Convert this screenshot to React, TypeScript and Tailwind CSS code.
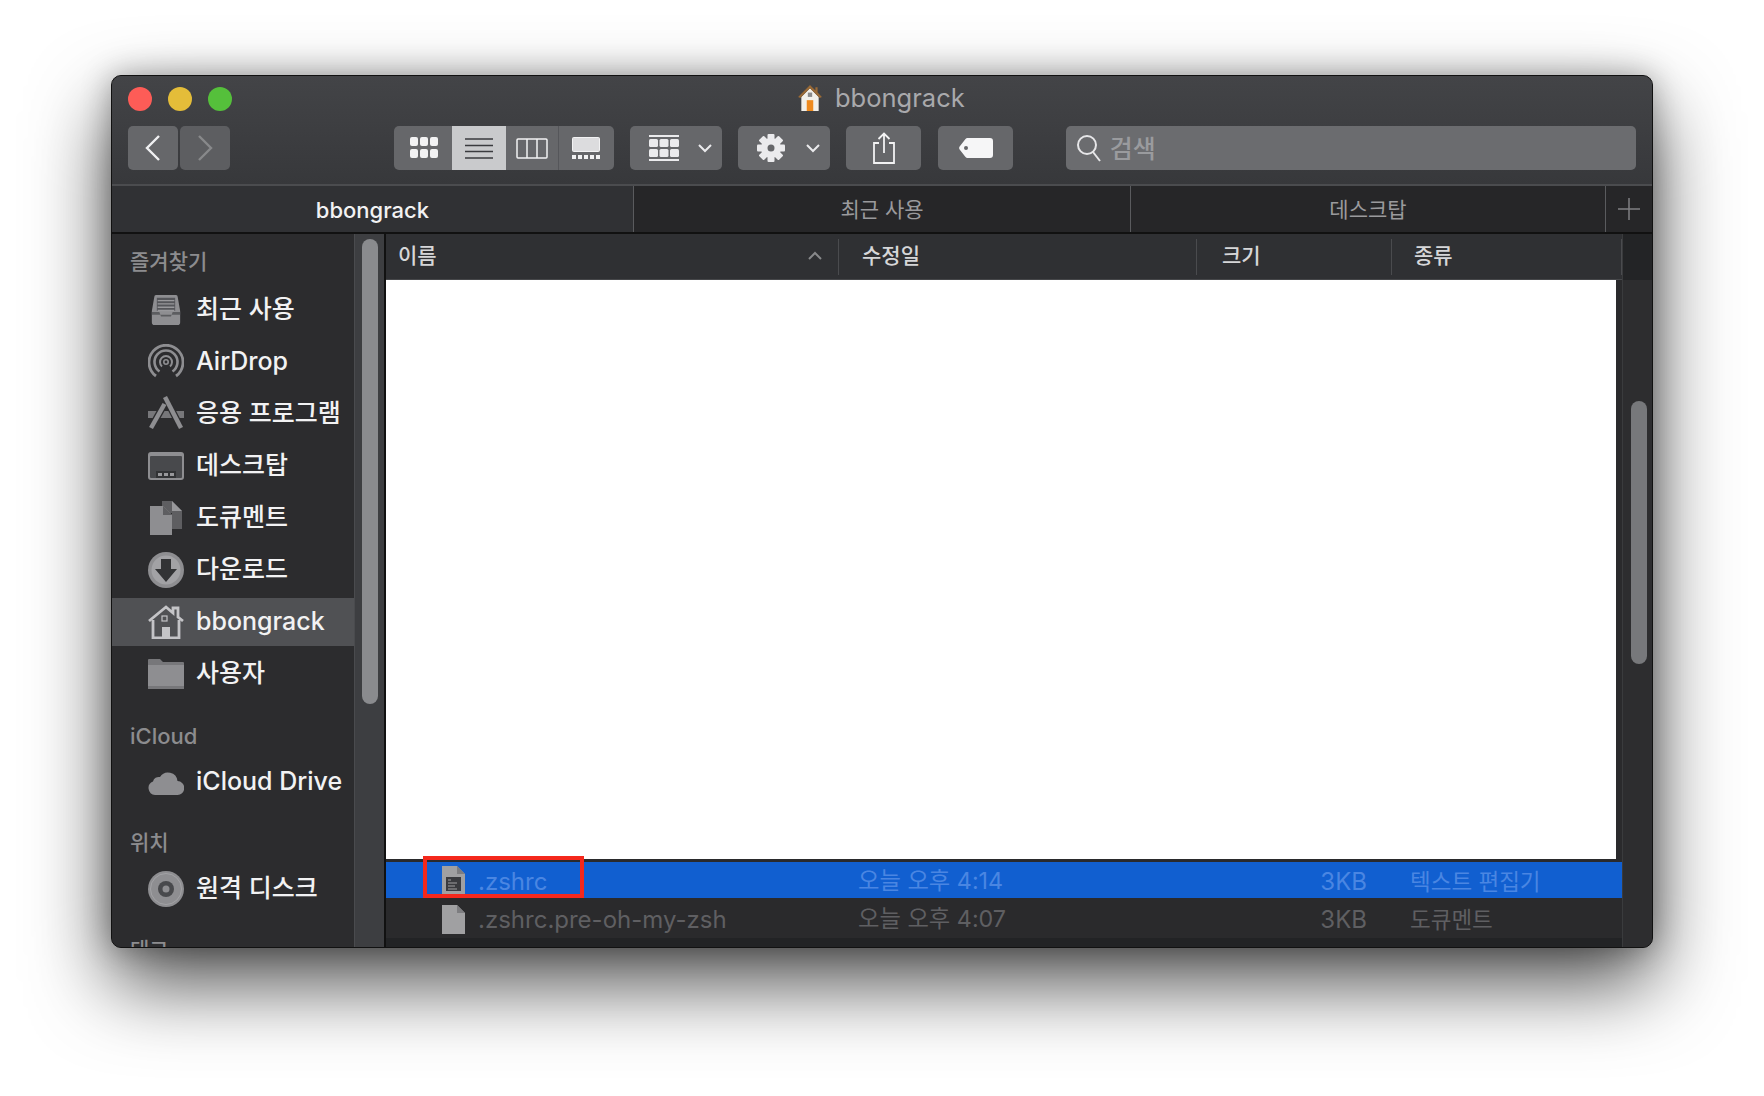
import { ReactNode } from 'react'

const font = { fontFamily: 'Inter, "Noto Sans CJK KR", sans-serif' }

function Recents() {
  return (
    <svg width="30" height="32" viewBox="0 0 36 34" preserveAspectRatio="none">
      <path d="M6 1h24a2 2 0 0 1 2 2l3 15v12a3 3 0 0 1-3 3H4a3 3 0 0 1-3-3V18L4 3a2 2 0 0 1 2-2z" fill="#8e8e91" />
      <path d="M7 4h22v14H7z" fill="#55565a" />
      <path d="M8 7h20M8 10.500h20M8 14h20M8 17.500h20" stroke="#98989b" strokeWidth="1.500" />
      <path d="M1 19h9l2 5h12l2-5h9v3H1z" fill="#5c5d60" />
    </svg>
  )
}

function AirDropIcon() {
  return (
    <svg width="36" height="36" viewBox="0 0 36 36" fill="none" stroke="#8e8e91">
      <circle cx="18" cy="18" r="2.200" strokeWidth="1.600" />
      <path d="M14 22.500A6 6 0 1 1 22 22.500" strokeWidth="2" />
      <path d="M11.500 27.500A11.500 11.500 0 1 1 24.500 27.500" strokeWidth="2.600" />
      <path d="M8 32A17 17 0 1 1 28 32" strokeWidth="2.800" />
    </svg>
  )
}

function AppsIcon() {
  return (
    <svg width="36" height="36" viewBox="0 0 36 36">
      <path d="M0 15h36v7H0z" fill="#77777a" />
      <path d="M17 1L33 32" stroke="#2c2c2e" strokeWidth="7" />
      <path d="M17 7L3 32" stroke="#2c2c2e" strokeWidth="7" />
      <path d="M17 1L33 32" stroke="#8e8e91" strokeWidth="4.500" />
      <path d="M16.500 8L3 32" stroke="#8e8e91" strokeWidth="4.500" />
    </svg>
  )
}

function DesktopIcon() {
  return (
    <svg width="36" height="28" viewBox="0 0 36 28">
      <rect width="36" height="28" rx="3" fill="#8e8e91" />
      <rect x="2" y="4" width="32" height="22" rx="1" fill="#48494c" />
      <rect x="8" y="19" width="20" height="7" fill="#323335" />
      <path d="M10 21h4v3h-4zM16 21h4v3h-4zM22 21h4v3h-4z" fill="#98989b" />
    </svg>
  )
}

function DocsIcon() {
  return (
    <svg width="32" height="34" viewBox="0 0 32 34">
      <path d="M12 0h10l10 10v18H22V12H12z" fill="#5e5e61" />
      <path d="M22 0l10 10H22z" fill="#98989b" />
      <path d="M0 5h13l9 9v20H0z" fill="#8e8e91" />
      <path d="M13 5l9 9h-9z" fill="#5e5e61" />
    </svg>
  )
}

function DownloadIcon() {
  return (
    <svg width="36" height="36" viewBox="0 0 36 36">
      <circle cx="18" cy="18" r="18" fill="#8e8e91" />
      <circle cx="18" cy="18" r="14.500" fill="#a2a2a5" />
      <path d="M13 7h10v10h6L18 30 7 17h6z" fill="#323335" />
    </svg>
  )
}

function HomeIcon() {
  return (
    <svg width="36" height="34" viewBox="0 0 36 34" fill="none">
      <path d="M1 16L18 2l7 6V3h5v9l5 4" stroke="#c4c4c7" strokeWidth="2.800" />
      <path d="M5 15v18h26V15" stroke="#c4c4c7" strokeWidth="2.800" />
      <rect x="14" y="11" width="5" height="5" stroke="#c4c4c7" strokeWidth="1.200" />
      <rect x="14" y="22" width="8" height="11" fill="#c4c4c7" />
    </svg>
  )
}

function FolderIcon() {
  return (
    <svg width="36" height="30" viewBox="0 0 36 30">
      <path d="M1 0h11l3 3h20a1 1 0 0 1 1 1v3H0V1a1 1 0 0 1 1-1z" fill="#77777a" />
      <path d="M0 6h36v23a1 1 0 0 1-1 1H1a1 1 0 0 1-1-1z" fill="#8e8e91" />
      <path d="M0 27h36v2a1 1 0 0 1-1 1H1a1 1 0 0 1-1-1z" fill="#77777a" />
    </svg>
  )
}

function CloudIcon() {
  return (
    <svg width="36" height="26" viewBox="0 0 36 26">
      <path d="M7 26a7 7 0 0 1-2-13.500A6 6 0 0 1 12 8 9.500 9.500 0 0 1 29.500 12 7 7 0 0 1 29 26z" fill="#8e8e91" />
    </svg>
  )
}

function DiskIcon() {
  return (
    <svg width="36" height="36" viewBox="0 0 36 36">
      <circle cx="18" cy="18" r="18" fill="#8e8e91" />
      <circle cx="18" cy="18" r="15.500" fill="none" stroke="#a2a2a5" strokeWidth="1" />
      <circle cx="18" cy="18" r="8" fill="#48494c" />
      <circle cx="18" cy="18" r="3.500" fill="#8e8e91" />
    </svg>
  )
}

function TitleHouse() {
  return (
    <svg width="24" height="26" viewBox="0 0 22 24">
      <path d="M3 11l8-8 8 8v13H3z" fill="#f2f0ea" />
      <path d="M11 0L0 11l2 1 9-9 9 9 2-1-4-4V2h-2v3z" fill="#9a6a36" />
      <rect x="8" y="14" width="6" height="10" fill="#ee8a1e" />
      <rect x="9" y="7" width="4" height="4" fill="#8a8a8a" />
    </svg>
  )
}

function FileIcon({ text }: { text?: boolean }) {
  return (
    <svg width="23" height="29" viewBox="0 0 23 29">
      <path d="M0 0h15l8 8v21H0z" fill="#a0a0a2" />
      <path d="M15 0l8 8h-8z" fill="#7d7d80" />
      {text && <rect x="4" y="11" width="15" height="14" fill="#3a3b3f" />}
      {text && <path d="M6 14h3M6 17h9M6 20h7M6 23h9" stroke="#a0a0a2" strokeWidth="1" />}
    </svg>
  )
}

function ToolBtn({ w, children }: { w: string; children: ReactNode }) {
  return <div className={`${w} h-[44px] pl-[2px] rounded-[5px] bg-[#66676a] flex items-center justify-center`}>{children}</div>
}

function MenuBtn({ children }: { children: ReactNode }) {
  return (
    <div className="w-[92px] h-[44px] rounded-[5px] bg-[#66676a] flex items-center justify-between pl-[19px] pr-[10px]">
      {children}
      <svg width="14" height="9" viewBox="0 0 14 9" fill="none" stroke="#ebebed" strokeWidth="2">
        <path d="M1 1l6 6 6-6" />
      </svg>
    </div>
  )
}

function Arrange() {
  return (
    <svg width="30" height="26" viewBox="0 0 30 26" fill="#ebebed">
      <path d="M0 0h30v2H0zM0 24h30v2H0z" />
      <rect x="0" y="4" width="9" height="8" rx="1.500" />
      <rect x="10.500" y="4" width="9" height="8" rx="1.500" />
      <rect x="21" y="4" width="9" height="8" rx="1.500" />
      <rect x="0" y="14" width="9" height="8" rx="1.500" />
      <rect x="10.500" y="14" width="9" height="8" rx="1.500" />
      <rect x="21" y="14" width="9" height="8" rx="1.500" />
    </svg>
  )
}

function Gear() {
  const teeth = [0, 45, 90, 135]
  return (
    <svg width="28" height="28" viewBox="0 0 28 28">
      {teeth.map(a => (
        <rect key={a} x="10.500" y="0" width="7" height="28" rx="1" fill="#ebebed" transform={`rotate(${a} 14 14)`} />
      ))}
      <circle cx="14" cy="14" r="10" fill="#ebebed" />
      <circle cx="14" cy="14" r="3.500" fill="#66676a" />
    </svg>
  )
}

function SideRow({ icon, label, active }: { icon: ReactNode; label: string; active?: boolean }) {
  return (
    <div className={`h-[48px] mb-[4px] pl-[36px] flex items-center gap-[12px] ${active ? 'bg-[#505154]' : ''}`}>
      <div className="w-[36px] flex justify-center">{icon}</div>
      <span className="text-[25px] font-medium text-[#f2f2f3] whitespace-nowrap">{label}</span>
    </div>
  )
}

function SideHead({ label, className }: { label: string; className: string }) {
  return <div className={`pl-[18px] font-medium leading-[28px] text-[#8c8c8f] ${className}`}>{label}</div>
}

function HeadCell({ label, w, pl, children }: { label: string; w: string; pl: string; children?: ReactNode }) {
  return (
    <div className={`${w} ${pl} h-[36px] pb-[2px] border-r border-[#4a4b4e] flex items-center justify-between text-[21px] font-medium text-[#d6d6d8] shrink-0`}>
      <span>{label}</span>
      {children}
    </div>
  )
}

function FileRow({ name, date, size, kind, selected }: { name: string; date: string; size: string; kind: string; selected?: boolean }) {
  return (
    <div className={`flex items-center text-[24px] ${selected ? 'h-[36px] bg-[#115fd0] text-[#4a86e2]' : 'h-[38px] mt-[2px] bg-[#2a2a2c] text-[#5f5f62]'}`}>
      <div className="w-[56px] shrink-0" />
      <FileIcon text={selected} />
      <div className={`flex items-center ${selected ? 'pt-[3px]' : 'pt-[1px]'}`}>
        <span className="ml-[13px] w-[380px] shrink-0 whitespace-nowrap">{name}</span>
        <span className="w-[449px] shrink-0 whitespace-nowrap text-[23.300px]">{date}</span>
        <span className="w-[60px] shrink-0 text-right whitespace-nowrap">{size}</span>
        <span className="ml-[43px] whitespace-nowrap text-[22.500px]">{kind}</span>
      </div>
    </div>
  )
}

export default function App() {
  return (
    <div className="w-[1764px] h-[1096px] bg-white pt-[75px] pl-[111px] overflow-hidden relative" style={font}>
      <div className="w-[1542px] h-[873px] rounded-[10px] bg-[#2c2c2e] border border-[#111] overflow-hidden flex flex-col shadow-[0_35px_80px_rgba(0,0,0,0.7),0_0_30px_rgba(0,0,0,0.3)]">
        {/* titlebar + toolbar */}
        <div className="h-[110px] shrink-0 bg-gradient-to-b from-[#434447] to-[#37383b] border-b-2 border-[#4b4c4f] pl-[16px] pr-[16px] flex flex-col">
          <div className="h-[50px] flex items-center relative pb-[4px]">
            <div className="flex gap-[16px]">
              <div className="w-[24px] h-[24px] rounded-full bg-[#fd5c57]" />
              <div className="w-[24px] h-[24px] rounded-full bg-[#e4bd39]" />
              <div className="w-[24px] h-[24px] rounded-full bg-[#55c03b]" />
            </div>
            <div className="absolute left-[670px] top-[7px] flex items-center gap-[13px]">
              <TitleHouse />
              <span className="text-[25.500px] text-[#a9a9ac] leading-[30px]">bbongrack</span>
            </div>
          </div>
          <div className="flex items-center">
            <div className="w-[50px] h-[44px] rounded-[5px] bg-[#66676a] flex items-center justify-center">
              <svg width="16" height="26" viewBox="0 0 16 26" fill="none" stroke="#f0f0f2" strokeWidth="2.400"><path d="M14 1L2 13l12 12" /></svg>
            </div>
            <div className="w-[50px] h-[44px] ml-[2px] rounded-[5px] bg-[#5d5e61] flex items-center justify-center">
              <svg width="16" height="26" viewBox="0 0 16 26" fill="none" stroke="#88898b" strokeWidth="2.400"><path d="M2 1l12 12L2 25" /></svg>
            </div>
            <div className="ml-[164px] w-[220px] h-[44px] rounded-[5px] bg-[#66676a] flex overflow-hidden">
              <div className="w-[58px] pl-[2px] flex items-center justify-center">
                <svg width="28" height="22" viewBox="0 0 28 22" fill="#f2f2f3">
                  <rect x="0" y="0" width="8" height="9" rx="2" /><rect x="10" y="0" width="8" height="9" rx="2" /><rect x="20" y="0" width="8" height="9" rx="2" />
                  <rect x="0" y="12" width="8" height="9" rx="2" /><rect x="10" y="12" width="8" height="9" rx="2" /><rect x="20" y="12" width="8" height="9" rx="2" />
                </svg>
              </div>
              <div className="w-[54px] bg-[#c9cacc] flex items-center justify-center">
                <svg width="28" height="21" viewBox="0 0 28 21" stroke="#3a3b3e" strokeWidth="1.500"><path d="M0 1h28M0 7.500h28M0 13.500h28M0 20h28" /></svg>
              </div>
              <div className="w-[53px] pl-[1px] border-r border-[#55565a] flex items-center justify-center">
                <svg width="32" height="21" viewBox="0 0 32 21" fill="none" stroke="#f2f2f3" strokeWidth="1.500"><rect x="1" y="1" width="30" height="19" rx="1" /><path d="M11 1v19M21 1v19" /></svg>
              </div>
              <div className="flex-1 flex items-center justify-center">
                <svg width="28" height="22" viewBox="0 0 28 22"><rect x="0.500" y="0.500" width="27" height="14" rx="1" fill="#dcdcde" stroke="#f2f2f3" /><path d="M0 18h4v4H0zM6 18h4v4H6zM12 18h4v4h-4zM18 18h4v4h-4zM24 18h4v4h-4z" fill="#f2f2f3" /></svg>
              </div>
            </div>
            <div className="ml-[16px]"><MenuBtn><Arrange /></MenuBtn></div>
            <div className="ml-[16px]"><MenuBtn><Gear /></MenuBtn></div>
            <div className="ml-[16px]">
              <ToolBtn w="w-[75px]">
                <svg width="24" height="32" viewBox="0 0 24 32" fill="none" stroke="#f2f2f3" strokeWidth="1.800"><path d="M7 11H2v20h20V11h-5M12 21V2M6.500 7L12 1.500 17.500 7" /></svg>
              </ToolBtn>
            </div>
            <div className="ml-[17px]">
              <ToolBtn w="w-[75px]">
                <svg width="34" height="20" viewBox="0 0 34 20"><path d="M9 0h22a3 3 0 0 1 3 3v14a3 3 0 0 1-3 3H9a3 3 0 0 1-2.500-1L1 12a3 3 0 0 1 0-4L6.500 1A3 3 0 0 1 9 0z" fill="#f6f6f7" /><circle cx="7" cy="10" r="2" fill="#66676a" /></svg>
              </ToolBtn>
            </div>
            <div className="ml-[53px] w-[571px] h-[44px] rounded-[5px] bg-[#6b6c6f] flex items-center pl-[10px] gap-[8px]">
              <svg width="26" height="28" viewBox="0 0 26 28" fill="none" stroke="#e6e6e8" strokeWidth="2"><circle cx="11" cy="11" r="9" /><path d="M17 18l7 9" /></svg>
              <span className="text-[25px] font-medium text-[#9a9b9e] pt-[4px]">검색</span>
            </div>
          </div>
        </div>

        {/* tabs */}
        <div className="h-[48px] shrink-0 flex border-b-2 border-[#111] text-[21px] bg-[#262628]">
          <div className="w-[522px] bg-[#303134] border-r border-[#5a5b5e] flex items-center justify-center text-[22px] text-[#f2f2f3] font-medium pt-[2px]">bbongrack</div>
          <div className="w-[497px] border-r border-[#5a5b5e] flex items-center justify-center text-[#9a9a9d] pt-[2px]">최근 사용</div>
          <div className="w-[475px] border-r border-[#5a5b5e] flex items-center justify-center text-[#9a9a9d] pt-[2px]">데스크탑</div>
          <div className="flex-1 flex items-center justify-center">
            <svg width="22" height="22" viewBox="0 0 22 22" stroke="#808083" strokeWidth="1.500"><path d="M11 0v22M0 11h22" /></svg>
          </div>
        </div>

        <div className="flex-1 flex min-h-0">
          {/* sidebar */}
          <div className="w-[242px] shrink-0 bg-[#2c2c2e] overflow-hidden pt-[14px]">
            <SideHead label="즐겨찾기" className="mb-[10px] text-[21px]" />
            <SideRow icon={<Recents />} label="최근 사용" />
            <SideRow icon={<AirDropIcon />} label="AirDrop" />
            <SideRow icon={<AppsIcon />} label="응용 프로그램" />
            <SideRow icon={<DesktopIcon />} label="데스크탑" />
            <SideRow icon={<DocsIcon />} label="도큐멘트" />
            <SideRow icon={<DownloadIcon />} label="다운로드" />
            <SideRow icon={<HomeIcon />} label="bbongrack" active />
            <SideRow icon={<FolderIcon />} label="사용자" />
            <SideHead label="iCloud" className="mt-[24px] mb-[8px] text-[22px]" />
            <SideRow icon={<CloudIcon />} label="iCloud Drive" />
            <SideHead label="위치" className="mt-[23px] mb-[8px] text-[21px]" />
            <SideRow icon={<DiskIcon />} label="원격 디스크" />
            <SideHead label="태그" className="mt-[23px] text-[21px]" />
          </div>
          <div className="w-[30px] shrink-0 bg-[#3d3e41] border-l border-[#4a4b4e] pl-[7px] pt-[5px]">
            <div className="w-[16px] h-[465px] rounded-full bg-[#8a8b8e]" />
          </div>

          {/* file list */}
          <div className="w-[1238px] shrink-0 border-l-2 border-[#111] flex flex-col bg-[#2a2a2c]">
            <div className="h-[46px] shrink-0 bg-[#2f3033] border-b border-[#46474a] flex items-center">
              <HeadCell label="이름" w="w-[453px]" pl="pl-[12px] pr-[16px]">
                <svg width="14" height="9" viewBox="0 0 14 9" fill="none" stroke="#88898b" strokeWidth="2"><path d="M1 8l6-6 6 6" /></svg>
              </HeadCell>
              <HeadCell label="수정일" w="w-[358px]" pl="pl-[23px]" />
              <HeadCell label="크기" w="w-[195px]" pl="pl-[25px]" />
              <HeadCell label="종류" w="w-[230px]" pl="pl-[22px]" />
            </div>
            <div className="h-[579px] shrink-0 bg-white mr-[6px]" />
            <div className="h-[3px] shrink-0 bg-[#2a2a2c]" />
            <FileRow name=".zshrc" date="오늘 오후 4:14" size="3KB" kind="텍스트 편집기" selected />
            <FileRow name=".zshrc.pre-oh-my-zsh" date="오늘 오후 4:07" size="3KB" kind="도큐멘트" />
            <div className="flex-1 bg-[#222325]" />
          </div>

          {/* right scroll column */}
          <div className="flex-1 bg-[#2d2d2f] border-l border-[#3a3b3d] flex flex-col">
            <div className="h-[46px] shrink-0 bg-[#232426]" />
            <div className="pl-[8px] pt-[121px]">
              <div className="w-[16px] h-[263px] rounded-full bg-[#77787b]" />
            </div>
          </div>
        </div>
      </div>

      {/* red annotation box */}
      <div className="absolute left-[423px] top-[856px] w-[161px] h-[42px] border-[4px] border-[#f4281c]" />
    </div>
  )
}
